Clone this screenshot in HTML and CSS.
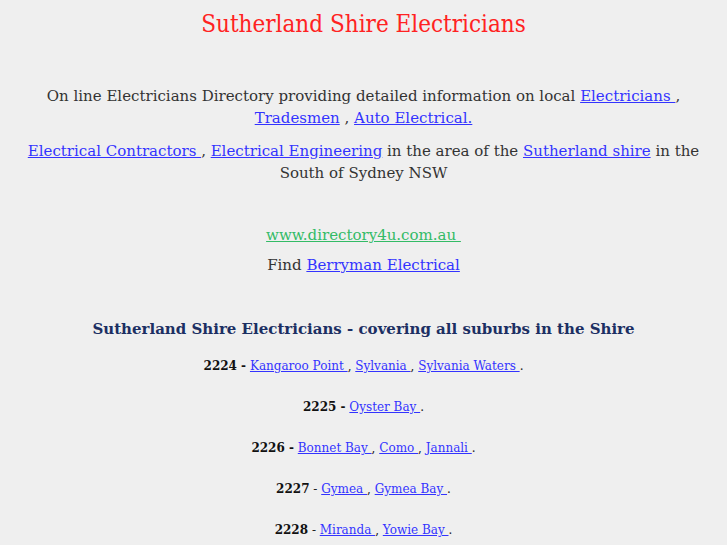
FILE: index.html
```html
<!DOCTYPE html>
<html>
  <head>
    <title>Sutherland Shire Electricians</title>
    <link rel="stylesheet" href="styles.css">
  </head>
  <body>
    <div class="page">
      <h1 class="title">Sutherland Shire Electricians</h1>

      <div class="intro">
        <p>On line Electricians Directory providing detailed information on local <a href="#">Electricians </a>, <a href="#">Tradesmen</a> , <a href="#">Auto Electrical.</a></p>
        <p><a href="#">Electrical Contractors </a>, <a href="#">Electrical Engineering</a> in the area of the <a href="#">Sutherland shire</a> in the South of Sydney NSW</p>
      </div>

      <div class="links">
        <p><a href="#" class="site">www.directory4u.com.au&nbsp; </a></p>
        <p>Find <a href="#">Berryman Electrical</a></p>
      </div>

      <h2 class="suburbs_head">Sutherland Shire Electricians - covering all suburbs in the Shire</h2>

      <ul class="postcodes">
        <li><b>2224 -</b> <a href="#">Kangaroo Point </a>, <a href="#">Sylvania </a>, <a href="#">Sylvania Waters </a>.</li>
        <li><b>2225 -</b> <a href="#">Oyster Bay </a>.</li>
        <li><b>2226 -</b> <a href="#">Bonnet Bay </a>, <a href="#">Como </a>, <a href="#">Jannali </a>.</li>
        <li><b>2227</b> - <a href="#">Gymea </a>, <a href="#">Gymea Bay </a>.</li>
        <li><b>2228</b> - <a href="#">Miranda </a>, <a href="#">Yowie Bay </a>.</li>
        <li><b>2229</b> - <a href="#">Caringbah </a>, <a href="#">Dolans Bay </a>, <a href="#">Lilli Pilli </a>.</li>
      </ul>
    </div>
  </body>
</html>
```
FILE: styles.css
```css
body{
  margin:0;
  background:#efefef;
  color:#333;
  font-family:"DejaVu Serif",serif;
}
a{
  color:#3333ff;
}
.page{
  text-align:center;
  padding:10px 20px;
}
.title{
  margin:0;
  font-weight:normal;
  font-stretch:condensed;
  font-size:24px;
  color:#ff2222;
}
.intro{
  margin-top:47px;
  font-size:15px;
  line-height:22px;
}
.intro p{
  margin:0 0 11px;
}
.links{
  margin-top:40px;
  font-size:15px;
  line-height:22px;
}
.links p{
  margin:0 0 8px;
}
a.site{
  color:#33bb66;
}
.suburbs_head{
  margin:44px 0 0;
  font-size:15px;
  color:#1c2f63;
}
.postcodes{
  list-style:none;
  margin:20px 0 0;
  padding:0;
  font-size:12px;
  color:#222;
}
.postcodes li{
  line-height:16px;
  margin-bottom:25px;
}
.postcodes b{
  color:#111;
}
```
